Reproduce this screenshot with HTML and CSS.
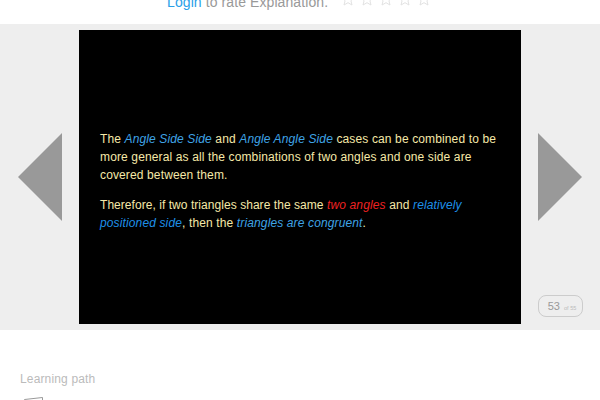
FILE: index.html
```html
<!DOCTYPE html>
<html lang="en">
<head>
    <meta charset="UTF-8">
    <meta name="viewport" content="width=device-width, initial-scale=1.0">
    <title>Explanation</title>
    <link rel="stylesheet" href="styles.css">
</head>
<body>
    <div class="rating">
        <span class="rating-text"><a href="#">Login</a> to rate Explanation.</span>
        <div class="stars">
            <svg class="star" viewBox="0 0 14 14"><path d="M7 1 L8.8 5.2 L13.4 5.6 L9.9 8.6 L11 13 L7 10.7 L3 13 L4.1 8.6 L0.6 5.6 L5.2 5.2 Z"/></svg>
            <svg class="star" viewBox="0 0 14 14"><path d="M7 1 L8.8 5.2 L13.4 5.6 L9.9 8.6 L11 13 L7 10.7 L3 13 L4.1 8.6 L0.6 5.6 L5.2 5.2 Z"/></svg>
            <svg class="star" viewBox="0 0 14 14"><path d="M7 1 L8.8 5.2 L13.4 5.6 L9.9 8.6 L11 13 L7 10.7 L3 13 L4.1 8.6 L0.6 5.6 L5.2 5.2 Z"/></svg>
            <svg class="star" viewBox="0 0 14 14"><path d="M7 1 L8.8 5.2 L13.4 5.6 L9.9 8.6 L11 13 L7 10.7 L3 13 L4.1 8.6 L0.6 5.6 L5.2 5.2 Z"/></svg>
            <svg class="star" viewBox="0 0 14 14"><path d="M7 1 L8.8 5.2 L13.4 5.6 L9.9 8.6 L11 13 L7 10.7 L3 13 L4.1 8.6 L0.6 5.6 L5.2 5.2 Z"/></svg>
        </div>
    </div>

    <div class="stage">
        <div class="side">
            <svg class="arrow" viewBox="0 0 44 88"><path d="M44 0 V88 L0 44 Z"/></svg>
        </div>
        <div class="slide">
            <p>The <em class="blue">Angle Side Side</em> and <em class="blue">Angle Angle Side</em> cases can be combined to be more general as all the combinations of two angles and one side are covered between them.</p>
            <p><span class="tight">Therefore, if two triangles share the same</span> <em class="red">two angles</em> and <em class="bright">relatively positioned side</em>, then the <em class="blue">triangles are congruent</em>.</p>
        </div>
        <div class="side">
            <svg class="arrow arrow-next" viewBox="0 0 44 88"><path d="M0 0 V88 L44 44 Z"/></svg>
            <div class="counter">53 <small>of 55</small></div>
        </div>
    </div>

    <div class="path">
        <h3>Learning path</h3>
        <svg class="path-icon" viewBox="0 0 24 3"><path d="M0.5 2.5 L18.5 0.5 V3 M0.5 2.5 V3"/></svg>
    </div>
</body>
</html>
```

FILE: styles.css
```css
html, body {
    height: 400px;
    overflow: hidden;
}

body {
    margin: 0;
    font-family: "Liberation Sans", Arial, sans-serif;
    background-color: #ffffff;
}

.rating {
    height: 24px;
    box-sizing: border-box;
    padding: 0 0 13px 167px;
    display: flex;
    align-items: flex-end;
    overflow: hidden;
    font-size: 14px;
    letter-spacing: 0.09px;
    line-height: 18px;
    color: #999999;
}

.rating a {
    color: #2a9fe8;
    text-decoration: none;
}

.stars {
    display: flex;
    gap: 5px;
    margin: 0 0 5px 13px;
}

.star {
    width: 14px;
    height: 14px;
    fill: none;
    stroke: #e2e2e2;
    stroke-width: 1;
}

.stage {
    height: 306px;
    background-color: #eeeeee;
    display: grid;
    grid-template-columns: 79px 442px 79px;
    padding: 6px 0;
    box-sizing: border-box;
}

.side {
    position: relative;
    display: flex;
    align-items: center;
    justify-content: center;
}

.arrow {
    width: 44px;
    height: 88px;
    fill: #999999;
}

.arrow-next {
    margin-right: 1px;
}

.slide {
    background-color: #000000;
    color: #f5e8a8;
    font-size: 12px;
    letter-spacing: 0.13px;
    line-height: 18px;
    padding: 8px 21px 0;
    display: flex;
    flex-direction: column;
    justify-content: center;
    gap: 12px;
}

.slide p {
    margin: 0;
}

.tight {
    letter-spacing: 0.05px;
}

.blue {
    color: #3fa4e6;
}

.bright {
    color: #1e90e8;
}

.red {
    color: #ee2222;
}

.counter {
    position: absolute;
    right: 17px;
    bottom: 7px;
    width: 45px;
    height: 22px;
    box-sizing: border-box;
    padding-left: 3px;
    border: 1px solid #cccccc;
    border-radius: 8px;
    color: #999999;
    font-size: 11px;
    line-height: 20px;
    text-align: center;
}

.counter small {
    font-size: 5.5px;
    color: #bbbbbb;
    margin-left: 1px;
}

.path {
    height: 70px;
    box-sizing: border-box;
    padding: 41px 20px 0;
}

.path h3 {
    margin: 0;
    font-size: 12px;
    letter-spacing: 0.15px;
    font-weight: normal;
    line-height: 16px;
    color: #bbbbbb;
}

.path-icon {
    display: block;
    width: 24px;
    height: 3px;
    margin: 10px 0 0 4px;
    fill: none;
    stroke: #999999;
    stroke-width: 1;
}
```
